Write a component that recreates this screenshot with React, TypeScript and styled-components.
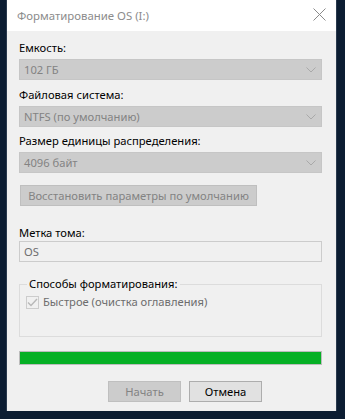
import styled, { createGlobalStyle } from "styled-components";

const GlobalStyle = createGlobalStyle`
	html, body {
		margin: 0;
		padding: 0;
		background: #0c1d32;
	}
	body {
		font-family: "Noto Sans", "Open Sans", sans-serif;
		font-size: 11.2px;
	}
`;

const Dialog = styled.div`
	width: 329px;
	height: 411px;
	margin-left: 7px;
	background: #f0f0f0;
	display: flex;
	flex-direction: column;
	box-shadow: 0 0 0 1px #2a3a4e;
`;

const TitleBar = styled.div`
	height: 31px;
	background: #ffffff;
	display: flex;
	align-items: center;
	justify-content: space-between;
	padding: 0 9px 0 10px;
	color: #8c8c8c;
	font-size: 11.4px;
`;

const CloseBtn = styled.div`
	width: 16px;
	height: 16px;
	display: flex;
	align-items: center;
	justify-content: center;
	margin-top: -2px;
`;

const Content = styled.div`
	display: flex;
	flex-direction: column;
	padding: 9px 14px 0 12px;
`;

const Label = styled.div<{ $top?: number; $gap?: number }>`
	line-height: 16px;
	color: #000;
	margin-top: ${(p) => p.$top ?? 0}px;
	margin-bottom: ${(p) => p.$gap ?? 3}px;
`;

const Combo = styled.div`
	height: 21px;
	box-sizing: border-box;
	background: #cccccc;
	border: 1px solid #c6c6c6;
	display: flex;
	align-items: center;
	justify-content: space-between;
	padding: 0 5px 0 4px;
	color: #838383;
`;

const TextInput = styled.div`
	height: 21px;
	box-sizing: border-box;
	background: #f0f0f0;
	border: 1px solid #cccccc;
	display: flex;
	align-items: center;
	padding: 0 4px;
	color: #6d6d6d;
`;

const Button = styled.div<{ $disabled?: boolean; $width?: number }>`
	height: 21px;
	width: ${(p) => p.$width ?? 73}px;
	box-sizing: border-box;
	background: ${(p) => (p.$disabled ? "#cccccc" : "#e1e1e1")};
	border: 1px solid ${(p) => (p.$disabled ? "#bfbfbf" : "#adadad")};
	color: ${(p) => (p.$disabled ? "#838383" : "#000")};
	display: flex;
	align-items: center;
	justify-content: center;
	white-space: nowrap;
`;

const ResetRow = styled.div`
	margin-top: 12px;
	padding-left: 1px;
`;

const Group = styled.fieldset`
	margin: 14px 0 0 0;
	padding: 2px 8px 0 6px;
	height: 61px;
	box-sizing: border-box;
	border: 1px solid #dcdcdc;
	min-width: 0;
`;

const Legend = styled.legend`
	padding: 0 2px;
	margin-left: 1px;
	line-height: 16px;
	color: #000;
`;

const CheckRow = styled.div`
	display: flex;
	align-items: center;
	gap: 4px;
	color: #6d6d6d;
	line-height: 16px;
`;

const CheckBox = styled.div`
	width: 13px;
	height: 13px;
	box-sizing: border-box;
	border: 1px solid #cccccc;
	background: #f0f0f0;
	display: flex;
	align-items: center;
	justify-content: center;
`;

const Progress = styled.div`
	margin-top: 14px;
	height: 14px;
	box-sizing: border-box;
	border: 1px solid #bcbcbc;
	background: #e6e6e6;
`;

const ProgressFill = styled.div`
	height: 100%;
	background: #06b025;
`;

const Footer = styled.div`
	display: flex;
	justify-content: flex-end;
	gap: 8px;
	margin-top: 16px;
	padding-right: 60px;
`;

function Chevron() {
	return (
		<svg width="10" height="6" viewBox="0 0 10 6">
			<polyline points="0.5,0.5 5,5 9.5,0.5" fill="none" stroke="#a9a9a9" strokeWidth="1" />
		</svg>
	);
}

function App() {
	const progress = 100;
	return (
		<>
			<GlobalStyle />
			<Dialog>
				<TitleBar>
					<span>Форматирование OS (I:)</span>
					<CloseBtn>
						<svg width="13" height="13" viewBox="0 0 13 13">
							<path d="M0.5 0.5 L12.5 12.5 M12.5 0.5 L0.5 12.5" stroke="#8a8a8a" strokeWidth="1" />
						</svg>
					</CloseBtn>
				</TitleBar>
				<Content>
					<Label>Емкость:</Label>
					<Combo>
						<span>102 ГБ</span>
						<Chevron />
					</Combo>
					<Label $top={7}>Файловая система:</Label>
					<Combo>
						<span>NTFS (по умолчанию)</span>
						<Chevron />
					</Combo>
					<Label $top={6}>Размер единицы распределения:</Label>
					<Combo>
						<span>4096 байт</span>
						<Chevron />
					</Combo>
					<ResetRow>
						<Button $disabled $width={237}>
							Восстановить параметры по умолчанию
						</Button>
					</ResetRow>
					<Label $top={19} $gap={0}>
						Метка тома:
					</Label>
					<TextInput>OS</TextInput>
					<Group>
						<Legend>Способы форматирования:</Legend>
						<CheckRow>
							<CheckBox>
								<svg width="11" height="9" viewBox="0 0 11 9">
									<polyline points="1,4.5 4,7.5 10,1" fill="none" stroke="#b8b8b8" strokeWidth="1.4" />
								</svg>
							</CheckBox>
							<span>Быстрое (очистка оглавления)</span>
						</CheckRow>
					</Group>
					<Progress>
						<ProgressFill style={{ width: `${progress}%` }} />
					</Progress>
					<Footer>
						<Button $disabled>Начать</Button>
						<Button>Отмена</Button>
					</Footer>
				</Content>
			</Dialog>
		</>
	);
}

export default App;
